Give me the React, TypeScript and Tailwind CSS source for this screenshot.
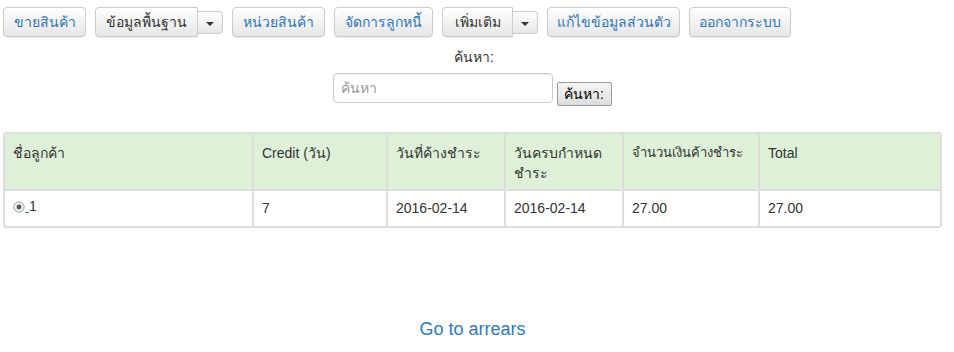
const btn =
  "shrink-0 whitespace-nowrap h-[30px] px-0 rounded-[4px] border border-[#cccccc] bg-gradient-to-b from-white to-[#e6e6e6] text-[14px] leading-none shadow-[inset_0_1px_0_rgba(255,255,255,0.15),0_1px_1px_rgba(0,0,0,0.075)] flex items-center justify-center";

function NavButton({ label, w }: { label: string; w: string }) {
  return <button className={`${btn} ${w} text-[#2f75b5]`}>{label}</button>;
}

function SplitButton({ label, w }: { label: string; w: string }) {
  return (
    <div className="flex items-center shrink-0">
      <button className={`${btn} ${w} text-[#333333] rounded-r-none`}>{label}</button>
      <button className="shrink-0 h-[23px] w-[25px] mt-[1px] rounded-r-[4px] border border-l-0 border-[#cccccc] bg-gradient-to-b from-white to-[#e6e6e6] flex items-center justify-center">
        <span className="w-0 h-0 border-l-[4px] border-r-[4px] border-t-[4px] border-l-transparent border-r-transparent border-t-[#333333] mt-[2px]" />
      </button>
    </div>
  );
}

const headers = ["ชื่อลูกค้า", "Credit (วัน)", "วันที่ค้างชำระ", "วันครบกำหนด ชำระ", "จำนวนเงินค้างชำระ", "Total"];
const widths = ["w-[248px]", "w-[134px]", "w-[118px]", "w-[118px]", "w-[136px]", "w-[181px]"];

export default function App() {
  return (
    <div className="w-[954px] h-[352px] bg-white text-[#333333] text-[14px] font-['Liberation_Sans','Noto_Sans','DejaVu_Sans',sans-serif] overflow-hidden">
      <div className="flex items-center gap-[9px] pl-[3px] pt-[7px]">
        <NavButton label="ขายสินค้า" w="w-[83px]" />
        <SplitButton label="ข้อมูลพื้นฐาน" w="w-[103px]" />
        <NavButton label="หน่วยสินค้า" w="w-[93px]" />
        <NavButton label="จัดการลูกหนี้" w="w-[99px]" />
        <SplitButton label="เพิ่มเติม" w="w-[71px]" />
        <NavButton label="แก้ไขข้อมูลส่วนตัว" w="w-[133px]" />
        <NavButton label="ออกจากระบบ" w="w-[102px]" />
      </div>

      <div className="flex flex-col items-center mt-[12px]">
        <div className="text-[14px] leading-[16px] text-[#333333] pr-[6px]">ค้นหา:</div>
        <div className="flex items-end gap-[4px] mt-[8px] pr-[10px]">
          <input
            placeholder="ค้นหา"
            className="w-[220px] h-[30px] px-[7px] rounded-[4px] border border-[#cccccc] text-[14px] placeholder:text-[#999999] outline-none shadow-[inset_0_1px_1px_rgba(0,0,0,0.075)]"
          />
          <button className="h-[24px] w-[55px] -mb-[3px] rounded-[2px] border border-[#9a9a9a] bg-gradient-to-b from-[#f6f6f6] to-[#dddddd] text-[14px] text-black leading-none">
            ค้นหา:
          </button>
        </div>
      </div>

      <div className="ml-[3px] mt-[29px] w-[939px] border-2 border-[#dddddd] rounded-[4px] overflow-hidden">
        <table className="border-collapse table-fixed w-full">
          <thead>
            <tr className="bg-[#dff0d8]">
              {headers.map((h, i) => (
                <th
                  key={i}
                  className={`${widths[i]} h-[56px] align-top text-left font-normal pt-[9px] leading-[20px] ${i === 4 ? "whitespace-nowrap pl-[8px] pr-0 text-[13px]" : "px-[8px]"} ${i > 0 ? "border-l-2 border-[#dddddd]" : ""}`}
                >
                  {h}
                </th>
              ))}
            </tr>
          </thead>
          <tbody>
            <tr className="border-t-2 border-[#dddddd]">
              <td className="h-[36px] px-[8px] align-middle">
                <span className="inline-flex items-end">
                  <svg width="12" height="12" viewBox="0 0 12 12" className="mb-[1px]">
                    <circle cx="6" cy="6" r="5.2" fill="#f0f0f0" stroke="#9a9a9a" strokeWidth="0.9" />
                    <circle cx="6" cy="6" r="2.4" fill="#555555" />
                  </svg>
                  <span className="w-[4px] h-[1px] bg-[#2f75b5] mb-[1px]" />
                  <span className="leading-[16px]">1</span>
                </span>
              </td>
              <td className="px-[8px] border-l-2 border-[#dddddd]">7</td>
              <td className="px-[8px] border-l-2 border-[#dddddd]">2016-02-14</td>
              <td className="px-[8px] border-l-2 border-[#dddddd]">2016-02-14</td>
              <td className="px-[8px] border-l-2 border-[#dddddd]">27.00</td>
              <td className="px-[8px] border-l-2 border-[#dddddd]">27.00</td>
            </tr>
          </tbody>
        </table>
      </div>

      <div className="flex justify-center mt-[91px] pr-[9px]">
        <a className="text-[18px] text-[#2f7ab8] leading-[20px]">Go to arrears</a>
      </div>
    </div>
  );
}
